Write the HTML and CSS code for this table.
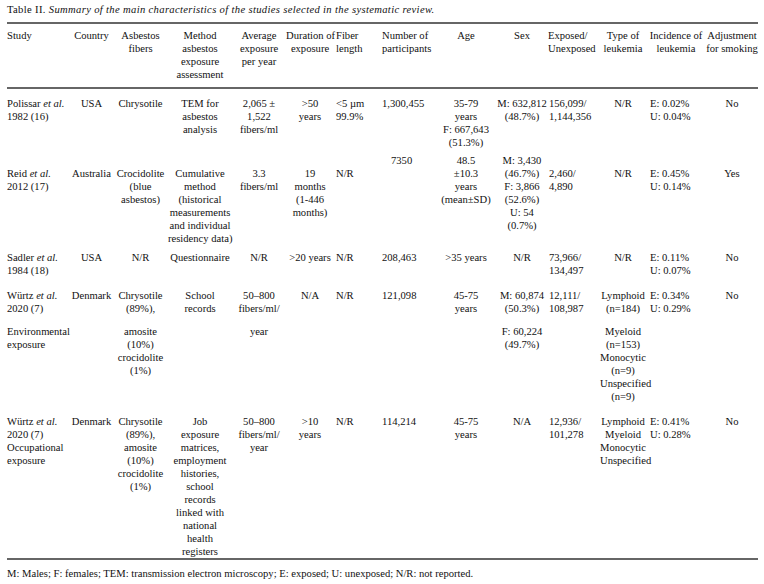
FILE: index.html
```html
<!DOCTYPE html>
<html lang="en">
<head>
<meta charset="utf-8">
<title>Table II</title>
<link rel="stylesheet" href="styles.css">
</head>
<body>
<p class="title">Table II. <i>Summary of the main characteristics of the studies selected in the systematic review.</i></p>
<table class="data">
  <colgroup>
    <col class="c1"><col class="c2"><col class="c3"><col class="c4"><col class="c5"><col class="c6"><col class="c7">
    <col class="c8"><col class="c9"><col class="c10"><col class="c11"><col class="c12"><col class="c13"><col class="c14">
  </colgroup>
  <thead>
    <tr>
      <th>Study</th>
      <th>Country</th>
      <th>Asbestos<br>fibers</th>
      <th>Method<br>asbestos<br>exposure<br>assessment</th>
      <th>Average<br>exposure<br>per year</th>
      <th>Duration of<br>exposure</th>
      <th>Fiber<br>length</th>
      <th>Number of<br>participants</th>
      <th>Age</th>
      <th>Sex</th>
      <th>Exposed/<br>Unexposed</th>
      <th>Type of<br>leukemia</th>
      <th>Incidence of<br>leukemia</th>
      <th>Adjustment<br>for smoking</th>
    </tr>
  </thead>
  <tbody>
    <tr class="r1">
      <td>Polissar <i>et al.</i><br>1982 (16)</td>
      <td>USA</td>
      <td>Chrysotile</td>
      <td>TEM for<br>asbestos<br>analysis</td>
      <td>2,065 ±<br>1,522<br>fibers/ml</td>
      <td>&gt;50<br>years</td>
      <td>&lt;5 µm<br>99.9%</td>
      <td>1,300,455</td>
      <td>35-79<br>years<br>F: 667,643<br>(51.3%)</td>
      <td>M: 632,812<br>(48.7%)</td>
      <td>156,099/<br>1,144,356</td>
      <td>N/R</td>
      <td>E: 0.02%<br>U: 0.04%</td>
      <td>No</td>
    </tr>
    <tr class="r2">
      <td>Reid <i>et al.</i><br>2012 (17)</td>
      <td>Australia</td>
      <td>Crocidolite<br>(blue<br>asbestos)</td>
      <td>Cumulative<br>method<br>(historical<br>measurements<br>and individual<br>residency data)</td>
      <td>3.3<br>fibers/ml</td>
      <td>19<br>months<br>(1-446<br>months)</td>
      <td>N/R</td>
      <td class="up indent">7350</td>
      <td class="up">48.5<br>±10.3<br>years<br>(mean±SD)</td>
      <td class="up">M: 3,430<br>(46.7%)<br>F: 3,866<br>(52.6%)<br>U: 54<br>(0.7%)</td>
      <td>2,460/<br>4,890</td>
      <td>N/R</td>
      <td>E: 0.45%<br>U: 0.14%</td>
      <td>Yes</td>
    </tr>
    <tr class="r3">
      <td>Sadler <i>et al.</i><br>1984 (18)</td>
      <td>USA</td>
      <td>N/R</td>
      <td>Questionnaire</td>
      <td>N/R</td>
      <td>&gt;20 years</td>
      <td>N/R</td>
      <td>208,463</td>
      <td>&gt;35 years</td>
      <td>N/R</td>
      <td>73,966/<br>134,497</td>
      <td>N/R</td>
      <td>E: 0.11%<br>U: 0.07%</td>
      <td>No</td>
    </tr>
    <tr class="r4">
      <td>Würtz <i>et al.</i><br>2020 (7)</td>
      <td>Denmark</td>
      <td>Chrysotile<br>(89%),</td>
      <td>School<br>records</td>
      <td>50–800<br>fibers/ml/</td>
      <td>N/A</td>
      <td>N/R</td>
      <td>121,098</td>
      <td>45-75<br>years</td>
      <td>M: 60,874<br>(50.3%)</td>
      <td>12,111/<br>108,987</td>
      <td>Lymphoid<br>(n=184)</td>
      <td>E: 0.34%<br>U: 0.29%</td>
      <td>No</td>
    </tr>
    <tr class="r5">
      <td>Environmental<br>exposure</td>
      <td></td>
      <td>amosite<br>(10%)<br>crocidolite<br>(1%)</td>
      <td></td>
      <td>year</td>
      <td></td>
      <td></td>
      <td></td>
      <td></td>
      <td>F: 60,224<br>(49.7%)</td>
      <td></td>
      <td>Myeloid<br>(n=153)<br>Monocytic<br>(n=9)<br>Unspecified<br>(n=9)</td>
      <td></td>
      <td></td>
    </tr>
    <tr class="r6">
      <td>Würtz <i>et al.</i><br>2020 (7)<br>Occupational<br>exposure</td>
      <td>Denmark</td>
      <td>Chrysotile<br>(89%),<br>amosite<br>(10%)<br>crocidolite<br>(1%)</td>
      <td>Job<br>exposure<br>matrices,<br>employment<br>histories,<br>school<br>records<br>linked with<br>national<br>health<br>registers</td>
      <td>50–800<br>fibers/ml/<br>year</td>
      <td>&gt;10<br>years</td>
      <td>N/R</td>
      <td>114,214</td>
      <td>45-75<br>years</td>
      <td>N/A</td>
      <td>12,936/<br>101,278</td>
      <td>Lymphoid<br>Myeloid<br>Monocytic<br>Unspecified</td>
      <td>E: 0.41%<br>U: 0.28%</td>
      <td>No</td>
    </tr>
  </tbody>
</table>
<p class="note">M: Males; F: females; TEM: transmission electron microscopy; E: exposed; U: unexposed; N/R: not reported.</p>
</body>
</html>
```
FILE: styles.css
```css
html, body {
  margin: 0;
  background: #ffffff;
}
body {
  padding: 3px 7px 0 7px;
  font-family: "Liberation Serif", "Times New Roman", serif;
  font-size: 10.6px;
  line-height: 13px;
  color: #111111;
}
.title {
  margin: 0 0 6px 0;
  white-space: nowrap;
  letter-spacing: 0.34px;
}
.data {
  width: 751px;
  table-layout: fixed;
  border-collapse: separate;
  border-spacing: 0;
  border-top: 2px solid #666666;
  border-bottom: 2px solid #666666;
}
.c1 { width: 63px; }
.c2 { width: 43px; }
.c3 { width: 55px; }
.c4 { width: 64px; }
.c5 { width: 54px; }
.c6 { width: 48px; }
.c7 { width: 41px; }
.c8 { width: 61px; }
.c9 { width: 60px; }
.c10 { width: 52px; }
.c11 { width: 52px; }
.c12 { width: 46px; }
.c13 { width: 60px; }
.c14 { width: 52px; }

.data th {
  font-weight: normal;
  vertical-align: top;
  text-align: center;
  padding: 5px 0 6px 0;
  border-bottom: 2px solid #666666;
  white-space: nowrap;
}
.data td {
  vertical-align: top;
  text-align: center;
  padding: 0;
  white-space: nowrap;
}
.data th:nth-child(1), .data td:nth-child(1) { text-align: left; }
.data th:nth-child(7), .data td:nth-child(7) { text-align: left; padding-left: 2px; }
.data th:nth-child(8), .data td:nth-child(8) { text-align: left; padding-left: 7px; }
.data th:nth-child(11) { text-align: left; }
.data td:nth-child(11) { text-align: left; padding-left: 1px; }
.data td:nth-child(13) { text-align: left; padding-left: 4px; }

.r1 td { padding-top: 8px; }
.r2 td { padding-top: 18px; }
.r2 td.up { padding-top: 5px; }
.data td.indent { padding-left: 16px; }
.r3 td { padding-top: 6px; }
.r4 td { padding-top: 12px; }
.r5 td { padding-top: 10px; }
.r6 td { padding-top: 12px; padding-bottom: 0; }

.note {
  margin: 7px 0 0 0;
  white-space: nowrap;
}
```
